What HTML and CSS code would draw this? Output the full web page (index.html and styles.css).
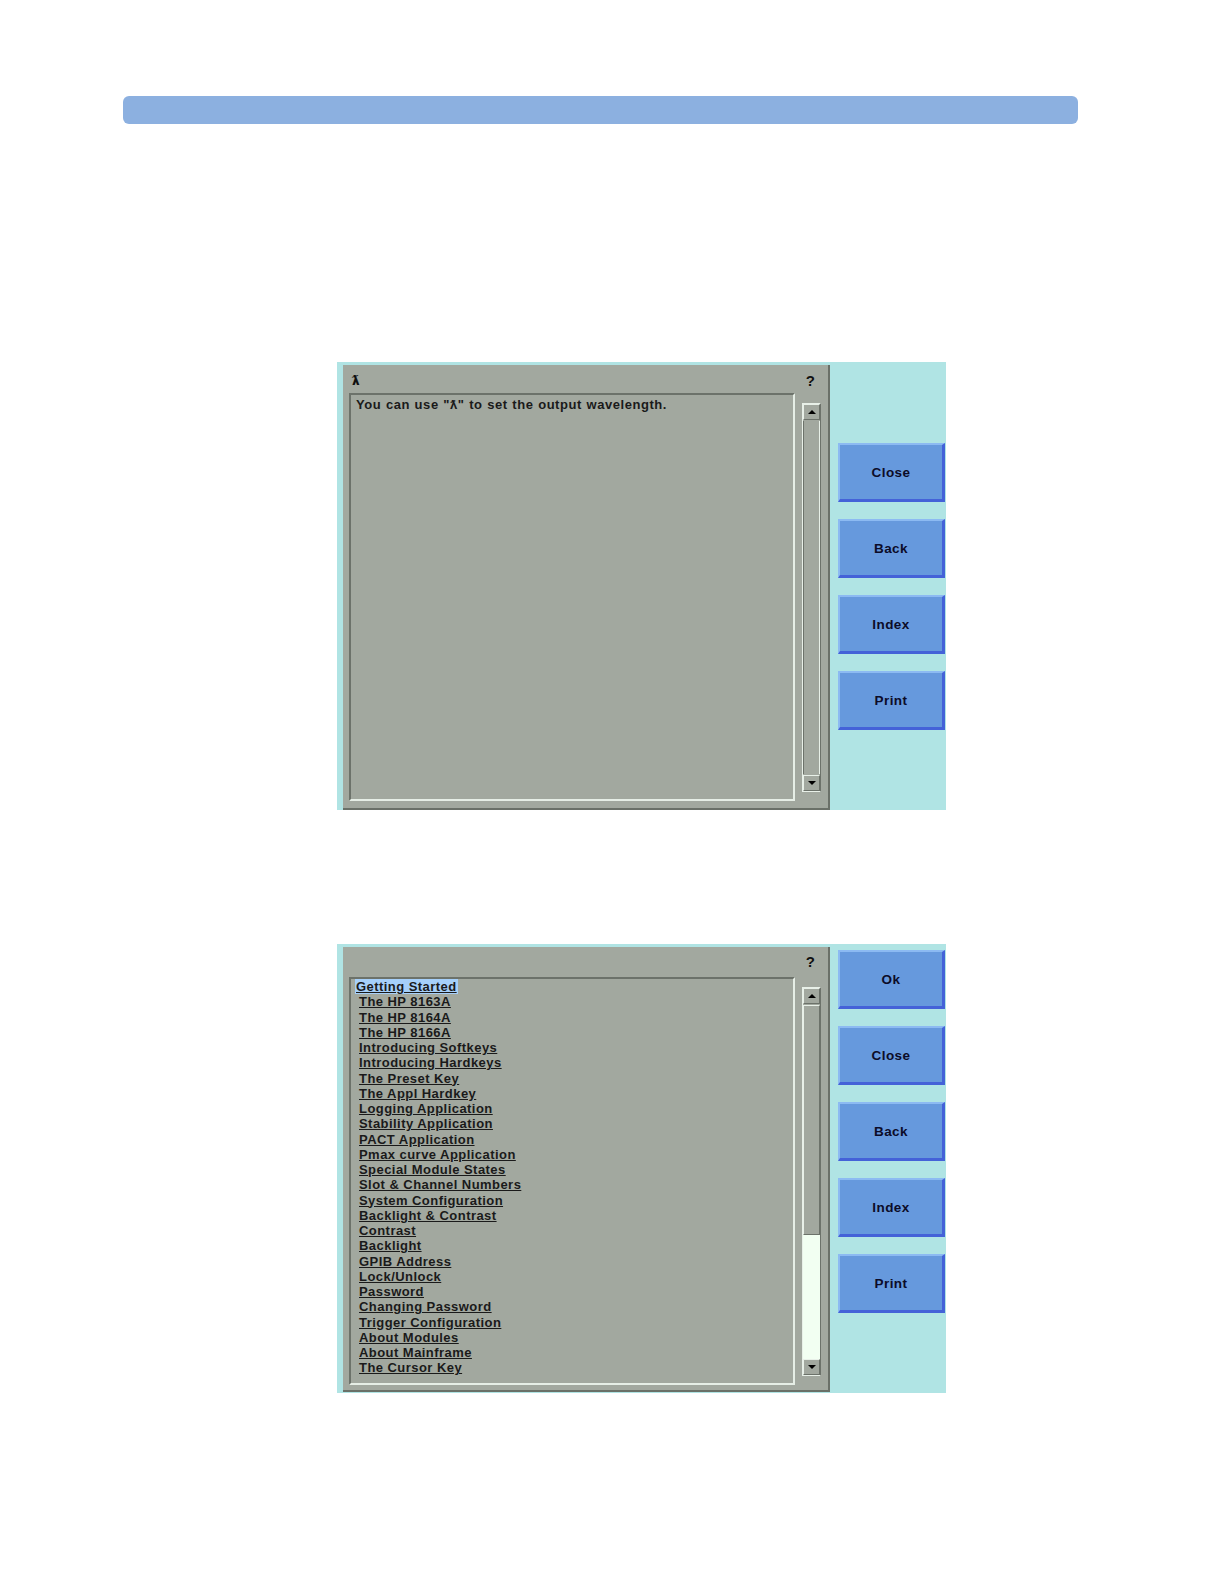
FILE: index.html
```html
<!DOCTYPE html>
<html>
<head>
<meta charset="utf-8">
<link rel="stylesheet" href="styles.css">
</head>
<body>
<div class="page">
<div class="topbar"></div>

<div class="screen screen-one">
  <div class="panel">
    <div class="title-row"><span class="title-sym">ƛ</span><span class="help">?</span></div>
    <div class="content-row">
      <div class="textbox">
        <p class="msg">You can use "ƛ" to set the output wavelength.</p>
      </div>
      <div class="scrollbar">
        <div class="sb-btn"><span class="tri up"></span></div>
        <div class="sb-track"></div>
        <div class="sb-btn"><span class="tri down"></span></div>
      </div>
    </div>
  </div>
  <div class="buttons buttons-one">
    <div class="btn">Close</div>
    <div class="btn">Back</div>
    <div class="btn">Index</div>
    <div class="btn">Print</div>
  </div>
</div>

<div class="screen screen-two">
  <div class="panel">
    <div class="title-row title-row-two"><span class="title-sym"></span><span class="help">?</span></div>
    <div class="content-row">
      <div class="textbox">
        <ul class="topics">
          <li class="sel"><span>Getting Started</span></li>
          <li><span>The HP 8163A</span></li>
          <li><span>The HP 8164A</span></li>
          <li><span>The HP 8166A</span></li>
          <li><span>Introducing Softkeys</span></li>
          <li><span>Introducing Hardkeys</span></li>
          <li><span>The Preset Key</span></li>
          <li><span>The Appl Hardkey</span></li>
          <li><span>Logging Application</span></li>
          <li><span>Stability Application</span></li>
          <li><span>PACT Application</span></li>
          <li><span>Pmax curve Application</span></li>
          <li><span>Special Module States</span></li>
          <li><span>Slot &amp; Channel Numbers</span></li>
          <li><span>System Configuration</span></li>
          <li><span>Backlight &amp; Contrast</span></li>
          <li><span>Contrast</span></li>
          <li><span>Backlight</span></li>
          <li><span>GPIB Address</span></li>
          <li><span>Lock/Unlock</span></li>
          <li><span>Password</span></li>
          <li><span>Changing Password</span></li>
          <li><span>Trigger Configuration</span></li>
          <li><span>About Modules</span></li>
          <li><span>About Mainframe</span></li>
          <li><span>The Cursor Key</span></li>
        </ul>
      </div>
      <div class="scrollbar scrollbar-two">
        <div class="sb-btn"><span class="tri up"></span></div>
        <div class="sb-track sb-thumb"></div>
        <div class="sb-empty"></div>
        <div class="sb-btn"><span class="tri down"></span></div>
      </div>
    </div>
  </div>
  <div class="buttons buttons-two">
    <div class="btn">Ok</div>
    <div class="btn">Close</div>
    <div class="btn">Back</div>
    <div class="btn">Index</div>
    <div class="btn">Print</div>
  </div>
</div>
</div>
</body>
</html>
```

FILE: styles.css
```css
html, body {
  margin: 0;
  padding: 0;
  background: #ffffff;
  font-family: "Liberation Sans", Arial, sans-serif;
}

.page {
  padding-top: 96px;
}

.topbar {
  margin-left: 123px;
  width: 955px;
  height: 28px;
  background: #8cb0e0;
  border-radius: 6px;
}

.screen {
  display: flex;
  width: 609px;
  margin-left: 337px;
  background: #b0e4e4;
  padding-top: 3px;
  box-sizing: border-box;
}

.screen-one {
  margin-top: 238px;
  height: 448px;
}

.screen-two {
  margin-top: 134px;
  height: 449px;
}

.panel {
  width: 487px;
  margin-left: 6px;
  background: #a2a89f;
  border-right: 2px solid #6a7068;
  border-bottom: 2px solid #6a7068;
  box-sizing: border-box;
  display: flex;
  flex-direction: column;
  height: 445px;
}

.title-row {
  height: 28px;
  display: flex;
  justify-content: space-between;
  align-items: center;
  padding: 2px 13px 0 9px;
  box-sizing: border-box;
  font-weight: bold;
  font-size: 14px;
  color: #101010;
}

.title-row-two {
  height: 30px;
  padding-top: 0;
  padding-bottom: 2px;
}

.title-sym {
  font-family: "DejaVu Sans", sans-serif;
  font-size: 13px;
  font-weight: bold;
}

.help {
  font-size: 15px;
  font-weight: bold;
}

.content-row {
  display: flex;
  padding-left: 6px;
}

.textbox {
  width: 446px;
  height: 408px;
  box-sizing: border-box;
  border-top: 2px solid #6c726a;
  border-left: 2px solid #6c726a;
  border-right: 2px solid #e6eee6;
  border-bottom: 2px solid #e6eee6;
  overflow: hidden;
}

.msg {
  margin: 0;
  padding: 2px 0 0 5px;
  font-size: 13px;
  font-weight: bold;
  color: #1a1a1a;
  letter-spacing: 0.55px;
  word-spacing: 0.5px;
}

.scrollbar {
  width: 19px;
  height: 389px;
  margin: 10px 0 0 7px;
  box-sizing: border-box;
  border-top: 1px solid #e8f0e8;
  border-left: 1px solid #e8f0e8;
  border-right: 1px solid #6c726a;
  border-bottom: 1px solid #e8f0e8;
  display: flex;
  flex-direction: column;
}

.sb-btn {
  height: 16px;
  box-sizing: border-box;
  border-top: 1px solid #e8f0e8;
  border-left: 1px solid #e8f0e8;
  border-right: 1px solid #6c726a;
  border-bottom: 1px solid #6c726a;
  display: flex;
  align-items: center;
  justify-content: center;
  flex: 0 0 auto;
}

.sb-track {
  flex: 1;
  border-left: 1px solid #6c726a;
  border-right: 1px solid #e8f0e8;
  margin: 1px 0;
}

.scrollbar-two .sb-thumb {
  flex: 0 0 228px;
  border: 1px solid #e8f0e8;
  border-right-color: #6c726a;
  border-bottom-color: #6c726a;
  margin: 1px 0 0 0;
}

.sb-empty {
  flex: 1;
  background: #f2fff2;
}

.tri {
  width: 0;
  height: 0;
  border-left: 4px solid transparent;
  border-right: 4px solid transparent;
}

.tri.up {
  border-bottom: 4px solid #000000;
}

.tri.down {
  border-top: 4px solid #000000;
}

.topics {
  list-style: none;
  margin: 0;
  padding: 0 0 0 8px;
  font-size: 13px;
  font-weight: bold;
  line-height: 15.25px;
  color: #1a1a1a;
  letter-spacing: 0.45px;
}

.topics li span {
  text-decoration: underline;
}

.topics li.sel span {
  margin-left: -4px;
  padding: 0 1px;
  background: #a6d0fa;
}

.buttons {
  display: flex;
  flex-direction: column;
  gap: 17px;
  margin-left: 8px;
}

.buttons-one {
  padding-top: 78px;
}

.buttons-two {
  padding-top: 3px;
}

.btn {
  width: 107px;
  height: 59px;
  box-sizing: border-box;
  background: #6699dd;
  border-top: 2px solid #8cbaf2;
  border-left: 2px solid #8cbaf2;
  border-right: 3px solid #4462d8;
  border-bottom: 3px solid #4462d8;
  display: flex;
  align-items: center;
  justify-content: center;
  font-size: 13.5px;
  font-weight: bold;
  color: #0c0c28;
  letter-spacing: 0.4px;
}
```
